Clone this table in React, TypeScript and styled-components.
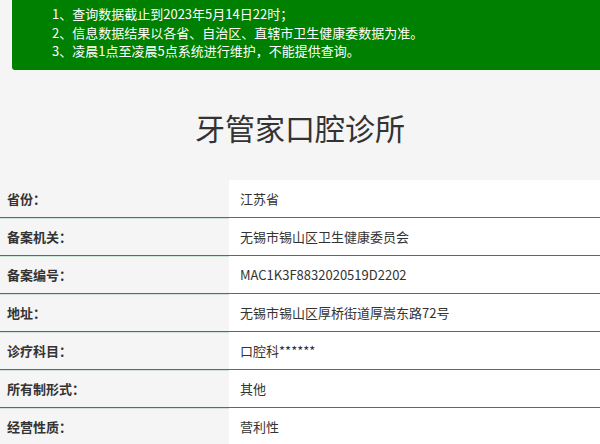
import React from "react";
import styled, { createGlobalStyle } from "styled-components";

const Global = createGlobalStyle`
  html, body { margin: 0; padding: 0; background: #f5f5f5; }
  body { font-family: "Noto Sans CJK SC", "Noto Sans", sans-serif; color: #333; overflow: hidden; }
`;

const Page = styled.div`
  width: 600px;
  height: 444px;
  overflow: hidden;
  display: flex;
  flex-direction: column;
`;

const Notice = styled.div`
  margin-left: 12px;
  background: #008000;
  border-radius: 0 0 0 3px;
  padding: 5px 0 9px 40px;
  color: #fff;
  font-size: 13px;
  line-height: 18.5px;
`;

const NoticeLine = styled.div``;

const Title = styled.h1`
  margin: 35px 0 12px;
  text-align: center;
  font-size: 30px;
  font-weight: 400;
  line-height: 45px;
  color: #333;
`;

const Divider = styled.div`
  margin-left: 10px;
  height: 1px;
  background: #e9e9e9;
`;

const Table = styled.div`
  margin-top: 18px;
  display: flex;
  flex-direction: column;
`;

const Row = styled.div`
  display: grid;
  grid-template-columns: 229px 1fr;
  height: 37px;
  border-bottom: 1px solid #3f7a5a;
  box-shadow: 0 1px 0 #cfe3d6;
  flex-shrink: 0;
`;

const Label = styled.div`
  display: flex;
  align-items: center;
  padding-left: 7px;
  font-size: 13px;
  font-weight: 700;
  color: #333;
`;

const Value = styled.div`
  display: flex;
  align-items: center;
  padding-left: 11px;
  background: #fff;
  font-size: 13px;
  color: #333;
`;

const rows: [string, string][] = [
  ["省份：", "江苏省"],
  ["备案机关：", "无锡市锡山区卫生健康委员会"],
  ["备案编号：", "MAC1K3F8832020519D2202"],
  ["地址：", "无锡市锡山区厚桥街道厚嵩东路72号"],
  ["诊疗科目：", "口腔科******"],
  ["所有制形式：", "其他"],
  ["经营性质：", "营利性"],
];

export default function App() {
  return (
    <Page>
      <Global />
      <Notice>
        <NoticeLine>1、查询数据截止到2023年5月14日22时；</NoticeLine>
        <NoticeLine>2、信息数据结果以各省、自治区、直辖市卫生健康委数据为准。</NoticeLine>
        <NoticeLine>3、凌晨1点至凌晨5点系统进行维护，不能提供查询。</NoticeLine>
      </Notice>
      <Title>牙管家口腔诊所</Title>
      <Divider />
      <Table>
        {rows.map(([l, v]) => (
          <Row key={l}>
            <Label>{l}</Label>
            <Value>{v}</Value>
          </Row>
        ))}
      </Table>
    </Page>
  );
}
